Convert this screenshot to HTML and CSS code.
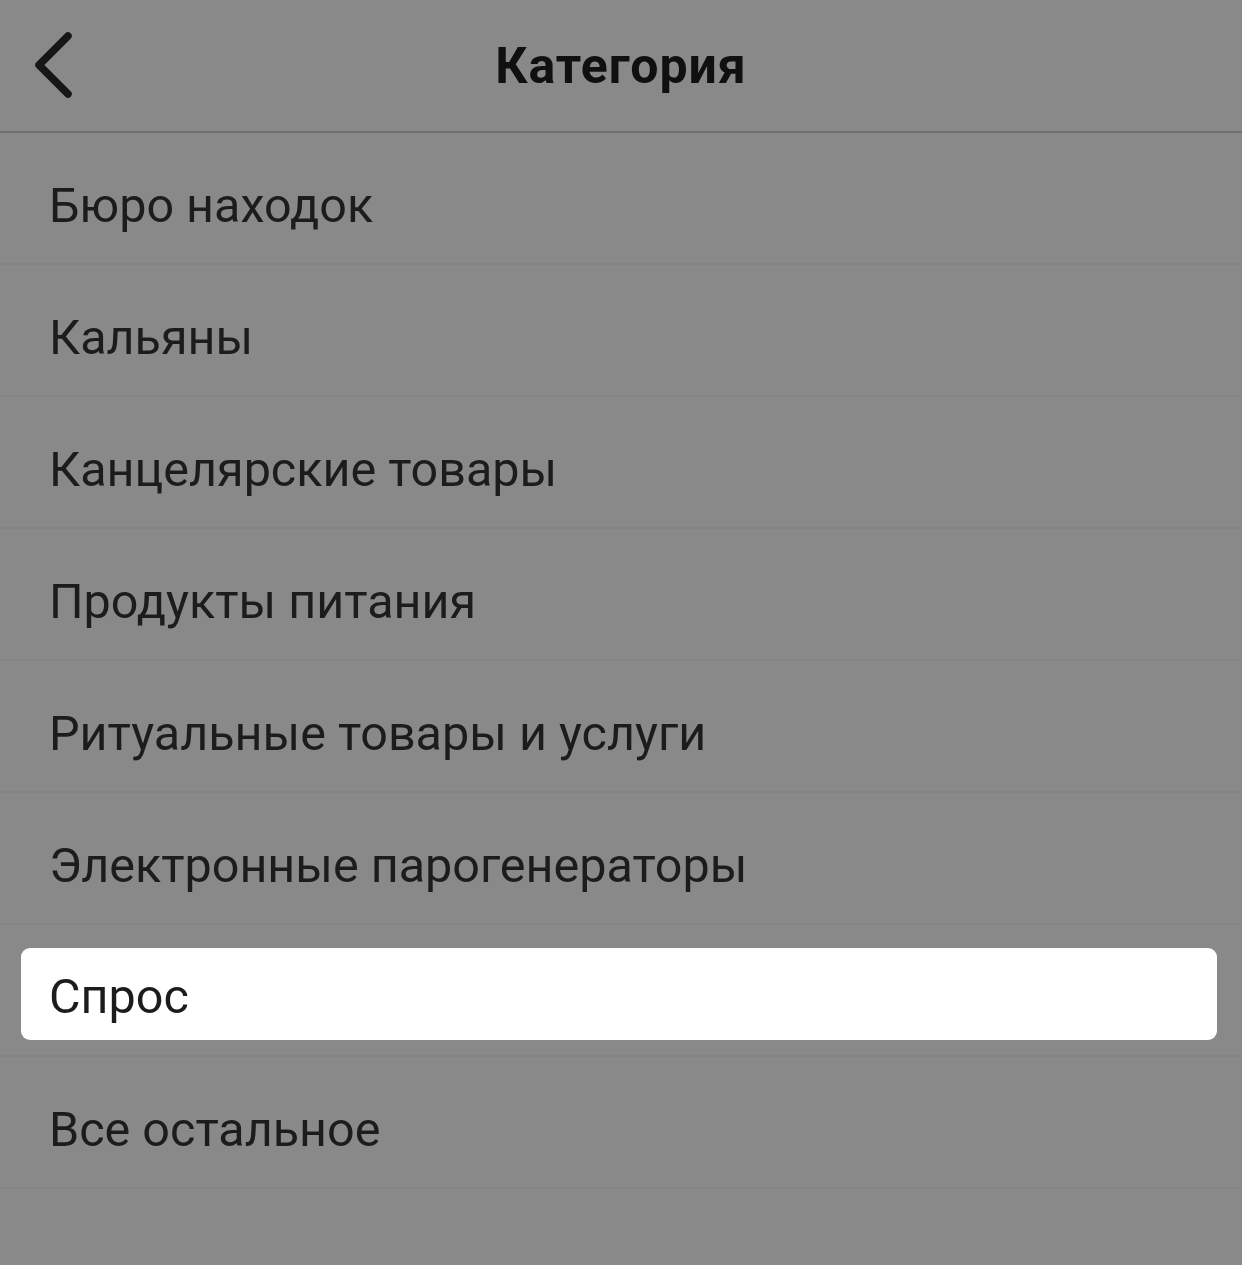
FILE: index.html
```html
<!DOCTYPE html>
<html lang="ru">
<head>
    <meta charset="UTF-8">
    <meta name="viewport" content="width=device-width, initial-scale=1.0">
    <title>Категория</title>
    <link rel="stylesheet" href="styles.css">
</head>
<body>
    <div class="header">
        <a href="#" class="back">
            <svg width="44" height="68" viewBox="0 0 44 68">
                <path d="M36 5 L7 34 L36 63" fill="none" stroke="#161616" stroke-width="7.5" stroke-linecap="round" stroke-linejoin="round"/>
            </svg>
        </a>
        <div class="title">Категория</div>
    </div>

    <div class="list">
        <div class="item"><span>Бюро находок</span></div>
        <div class="item"><span>Кальяны</span></div>
        <div class="item"><span>Канцелярские товары</span></div>
        <div class="item"><span>Продукты питания</span></div>
        <div class="item"><span>Ритуальные товары и услуги</span></div>
        <div class="item"><span>Электронные парогенераторы</span></div>
        <div class="item selected"><span>Спрос</span></div>
        <div class="item"><span>Все остальное</span></div>
    </div>
</body>
</html>
```

FILE: styles.css
```css
body {
    font-family: Roboto, "Noto Sans", sans-serif;
    margin: 0;
    padding: 0;
    background-color: #898989;
    color: #1c1c1c;
}

.header {
    height: 131px;
    border-bottom: 2px solid #6f6f6f;
    display: flex;
    align-items: center;
    justify-content: center;
    position: relative;
}

.header .back {
    position: absolute;
    left: 32px;
    top: 31px;
    display: block;
}

.header .title {
    font-size: 50px;
    font-weight: 700;
    letter-spacing: 1px;
    color: #101010;
}

.item {
    height: 132px;
    border-bottom: 2px solid #848484;
    display: flex;
    align-items: center;
    padding: 14px 50px 0 49px;
    box-sizing: border-box;
    font-size: 48.5px;
}

.item.selected {
    padding: 23px 25px 15px 21px;
}

.item.selected span {
    flex: 1;
    height: 92px;
    background-color: #ffffff;
    border-radius: 9px;
    display: flex;
    align-items: center;
    padding: 4px 28px 0;
    box-sizing: border-box;
}
```
